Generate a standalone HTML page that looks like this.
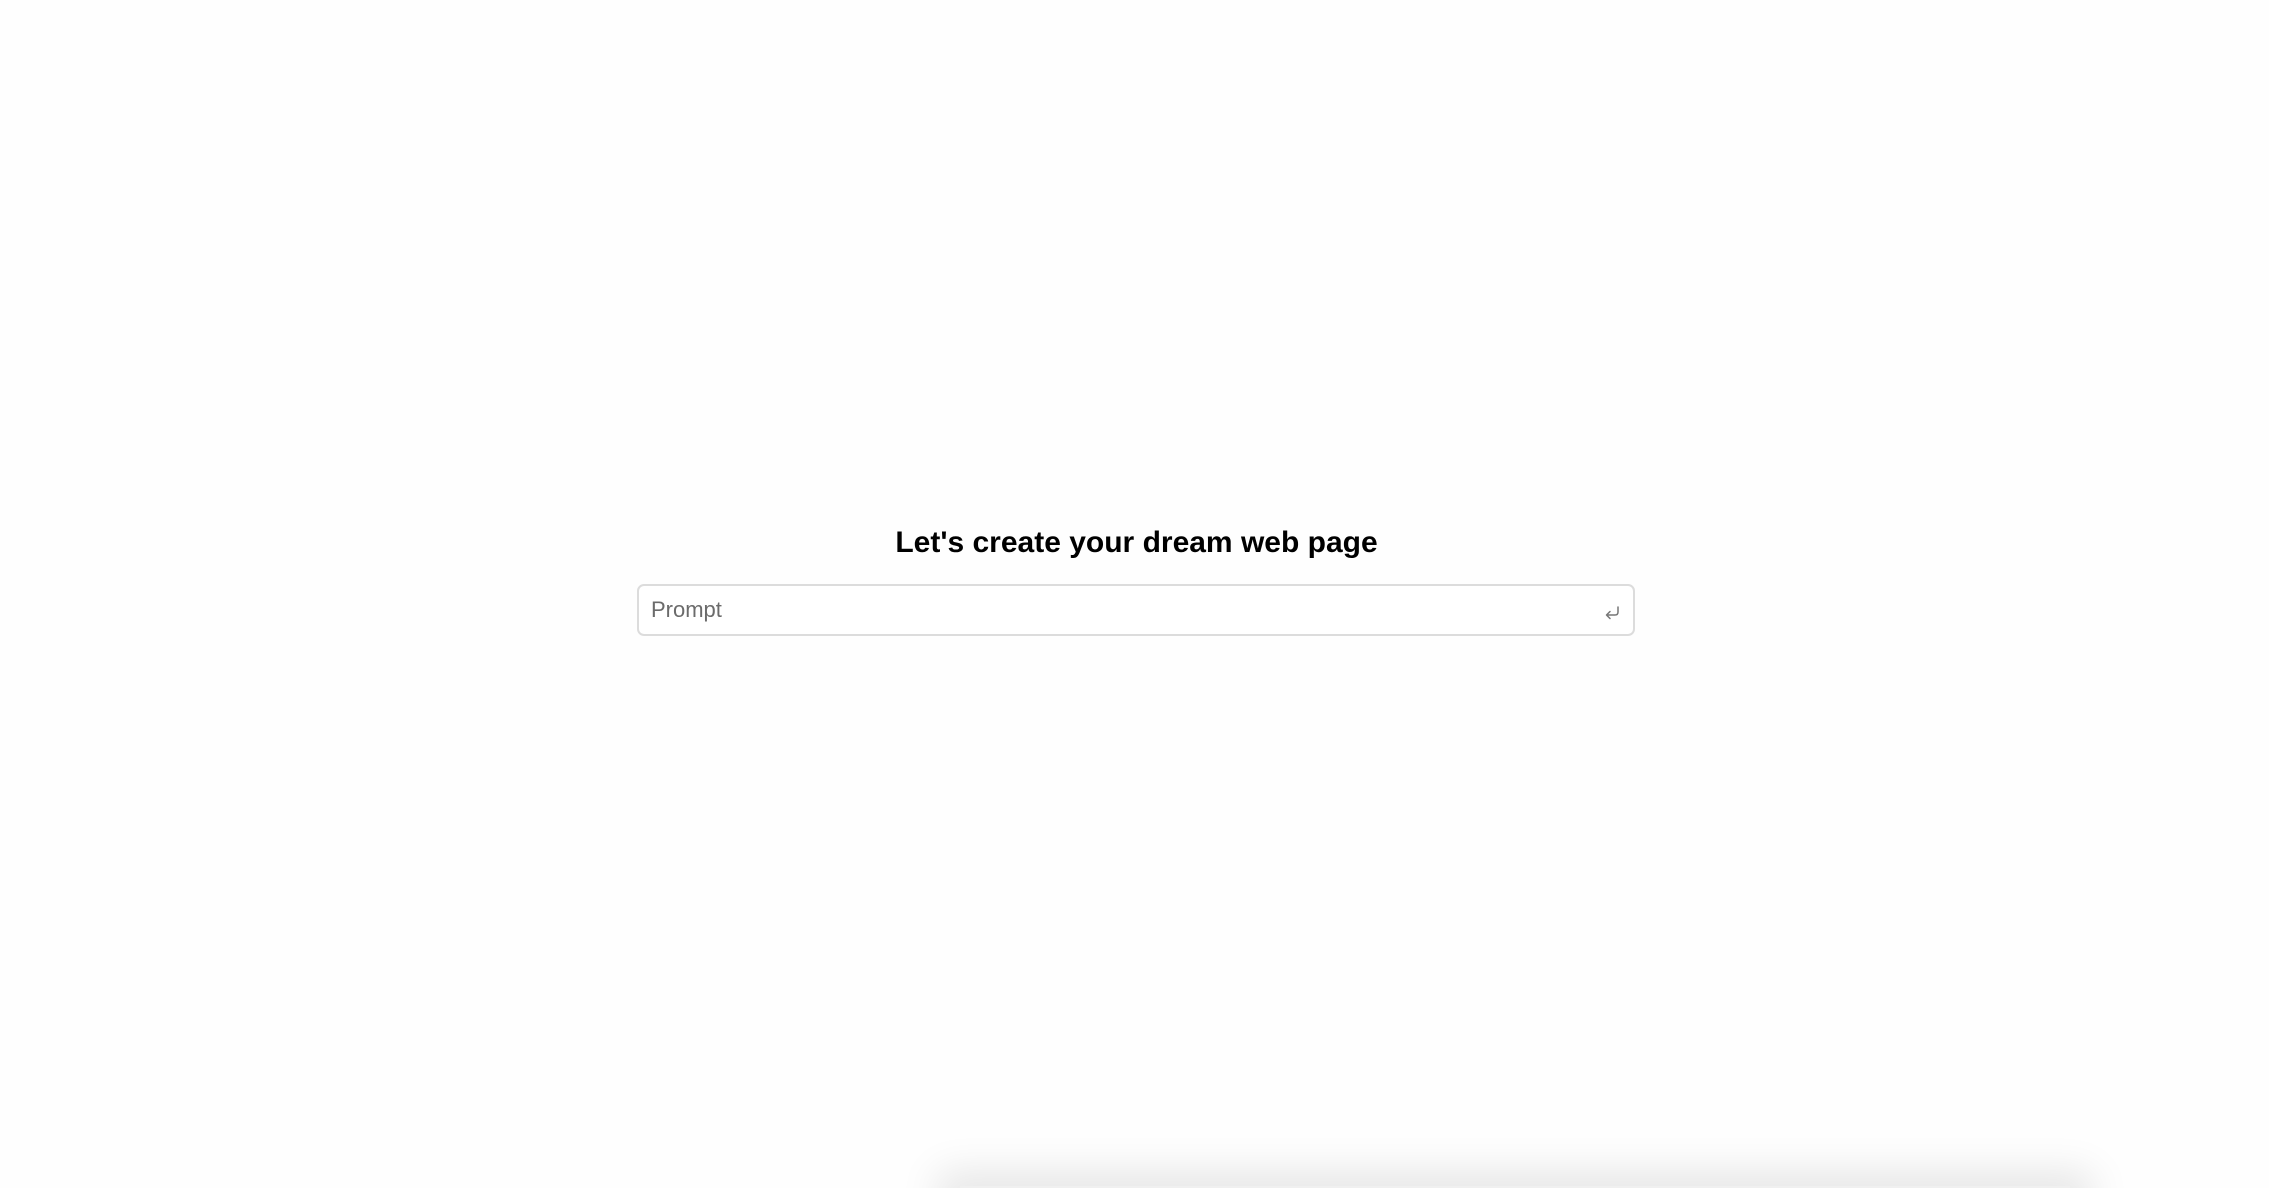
<!DOCTYPE html>
<html><head><style>
html,body{margin:0;padding:0;width:2269px;height:1188px;overflow:hidden;background:#fefefe;font-family:"Liberation Sans",Arial,sans-serif;}
.wrap{position:relative;width:2269px;height:1188px;overflow:hidden;}
h1{position:absolute;left:2px;width:2269px;top:523px;margin:0;text-align:center;font-size:30px;font-weight:bold;color:#000;line-height:40px;}
.box{position:absolute;left:637px;top:584px;width:998px;height:52px;box-sizing:border-box;border:2px solid #dcdcdc;border-radius:7px;background:#fff;}
.ph{position:absolute;left:12px;top:11px;font-size:22px;color:#6b6b6b;line-height:26px;}
.ic{position:absolute;right:12px;top:19px;}
.sh{position:absolute;left:960px;top:1186px;width:1110px;height:2px;border-radius:2px;box-shadow:0 8px 40px 22px rgba(0,0,0,0.1);background:#f0f0f0;}
</style></head><body><div class="wrap">
<h1>Let's create your dream web page</h1>
<div class="box"><div class="ph">Prompt</div>
<svg class="ic" width="18" height="16" viewBox="0 0 18 16"><path d="M15 2 V7 Q15 10 12 10 H4 M7 6.5 L3.5 10 L7 13.5" fill="none" stroke="#777" stroke-width="1.5" stroke-linecap="round" stroke-linejoin="round"/></svg>
</div>
<div class="sh"></div>
</div></body></html>
